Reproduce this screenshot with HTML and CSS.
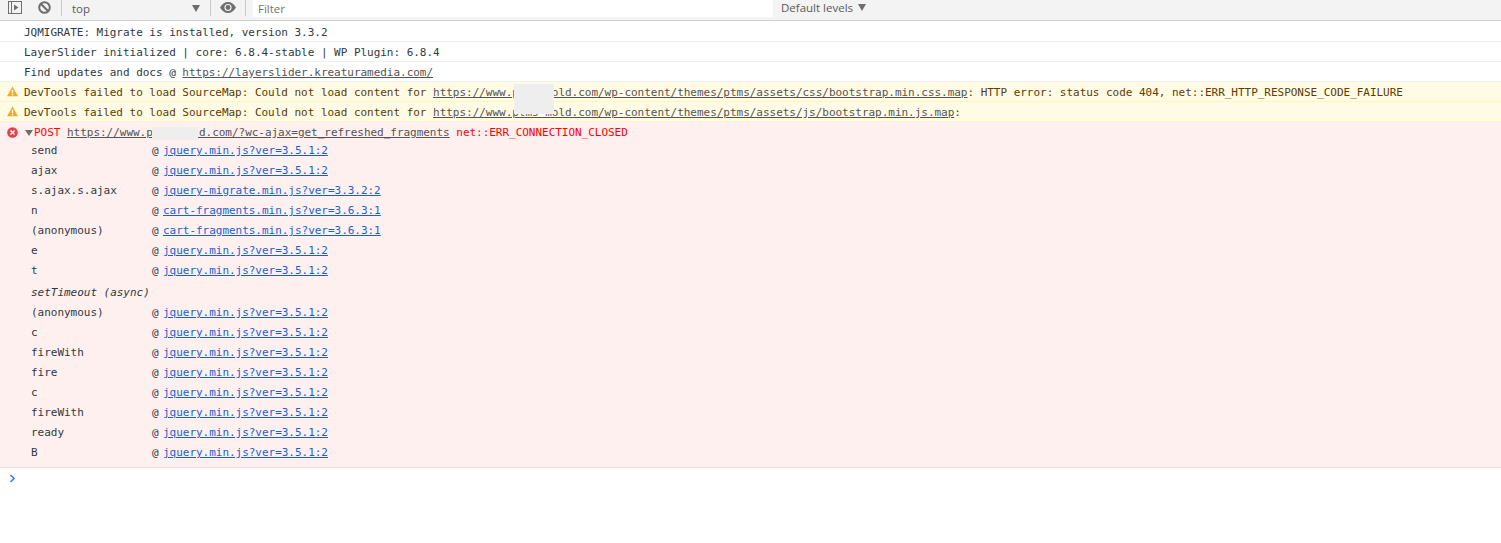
FILE: index.html
```html
<!DOCTYPE html>
<html lang="en">
<head>
<meta charset="utf-8">
<title>Console</title>
<link rel="stylesheet" href="styles.css">
</head>
<body>
<div class="toolbar">
  <svg class="tb-icon sidebar-icon" width="15" height="13" viewBox="0 0 15 13"><rect x="0.500" y="0.500" width="13" height="12" fill="none" stroke="#6e6e6e"/><path d="M3.500 .5v12" stroke="#6e6e6e" fill="none"/><path d="M6 3.500l4.500 3-4.500 3z" fill="#6e6e6e"/></svg>
  <svg class="tb-icon clear-icon" width="13" height="13" viewBox="0 0 13 13"><circle cx="6.500" cy="6.500" r="5.300" fill="none" stroke="#6e6e6e" stroke-width="2"/><path d="M2.800 2.800l7.400 7.400" stroke="#6e6e6e" stroke-width="2"/></svg>
  <span class="tb-sep sep-a"></span>
  <div class="context"><span>top</span><span class="caret"></span></div>
  <span class="tb-sep"></span>
  <svg class="tb-icon eye-icon" width="16" height="11" viewBox="0 0 16 11"><path d="M0 5.500C2 2 4.800 0 8 0s6 2 8 5.500c-2 3.500-4.800 5.500-8 5.500s-6-2-8-5.500z" fill="#6e6e6e"/><circle cx="8" cy="5.500" r="3.600" fill="#f3f3f3"/><circle cx="8" cy="5.500" r="2.400" fill="#6e6e6e"/></svg>
  <span class="tb-sep"></span>
  <div class="filter">Filter</div>
  <div class="levels"><span>Default levels</span><span class="caret"></span></div>
</div>

<div class="console">
  <div class="msg">JQMIGRATE: Migrate is installed, version 3.3.2</div>
  <div class="msg">LayerSlider initialized | core: 6.8.4-stable | WP Plugin: 6.8.4</div>
  <div class="msg">Find updates and docs @ <a class="plain-link">https://layerslider.kreaturamedia.com/</a></div>
  <div class="msg warn"><svg class="level-icon" width="11" height="11" viewBox="0 0 12 12"><path d="M6 .5L12 11.200H0z" fill="#f2ab26"/><path d="M5.300 4h1.400v4H5.300zM5.300 8.800h1.400v1.400H5.300z" fill="#fff"/></svg>DevTools failed to load SourceMap: Could not load content for <a class="warn-link">https://www.ptms-mold.com/wp-content/themes/ptms/assets/css/bootstrap.min.css.map</a>: HTTP error: status code 404, net::ERR_HTTP_RESPONSE_CODE_FAILURE</div>
  <div class="msg warn"><svg class="level-icon" width="11" height="11" viewBox="0 0 12 12"><path d="M6 .5L12 11.200H0z" fill="#f2ab26"/><path d="M5.300 4h1.400v4H5.300zM5.300 8.800h1.400v1.400H5.300z" fill="#fff"/></svg>DevTools failed to load SourceMap: Could not load content for <a class="warn-link">https://www.ptms-mold.com/wp-content/themes/ptms/assets/js/bootstrap.min.js.map</a>:</div>
  <div class="error">
    <div class="error-head"><svg class="level-icon err-icon" width="11" height="11" viewBox="0 0 12 12"><circle cx="6" cy="6" r="5.800" fill="#e8404a"/><path d="M3.800 3.800l4.400 4.400M8.200 3.800l-4.400 4.400" stroke="#fff" stroke-width="1.500"/></svg><span class="tri"></span><span class="err-text">POST</span> <a class="plain-link">https://www.ptms-mold.com/?wc-ajax=get_refreshed_fragments</a> <span class="err-text">net::ERR_CONNECTION_CLOSED</span></div>
    <div class="stack">
      <div class="frame"><span>send</span><span class="at">@<a>jquery.min.js?ver=3.5.1:2</a></span></div>
      <div class="frame"><span>ajax</span><span class="at">@<a>jquery.min.js?ver=3.5.1:2</a></span></div>
      <div class="frame"><span>s.ajax.s.ajax</span><span class="at">@<a>jquery-migrate.min.js?ver=3.3.2:2</a></span></div>
      <div class="frame"><span>n</span><span class="at">@<a>cart-fragments.min.js?ver=3.6.3:1</a></span></div>
      <div class="frame"><span>(anonymous)</span><span class="at">@<a>cart-fragments.min.js?ver=3.6.3:1</a></span></div>
      <div class="frame"><span>e</span><span class="at">@<a>jquery.min.js?ver=3.5.1:2</a></span></div>
      <div class="frame"><span>t</span><span class="at">@<a>jquery.min.js?ver=3.5.1:2</a></span></div>
      <div class="async">setTimeout (async)</div>
      <div class="frame"><span>(anonymous)</span><span class="at">@<a>jquery.min.js?ver=3.5.1:2</a></span></div>
      <div class="frame"><span>c</span><span class="at">@<a>jquery.min.js?ver=3.5.1:2</a></span></div>
      <div class="frame"><span>fireWith</span><span class="at">@<a>jquery.min.js?ver=3.5.1:2</a></span></div>
      <div class="frame"><span>fire</span><span class="at">@<a>jquery.min.js?ver=3.5.1:2</a></span></div>
      <div class="frame"><span>c</span><span class="at">@<a>jquery.min.js?ver=3.5.1:2</a></span></div>
      <div class="frame"><span>fireWith</span><span class="at">@<a>jquery.min.js?ver=3.5.1:2</a></span></div>
      <div class="frame"><span>ready</span><span class="at">@<a>jquery.min.js?ver=3.5.1:2</a></span></div>
      <div class="frame"><span>B</span><span class="at">@<a>jquery.min.js?ver=3.5.1:2</a></span></div>
    </div>
  </div>
  <div class="prompt">
    <svg width="7" height="9" viewBox="0 0 7 9"><path d="M1.500 1l3.500 3.500L1.500 8" fill="none" stroke="#367cf1" stroke-width="1.600"/></svg>
  </div>
  <span class="redact redact-a"></span>
  <span class="redact redact-b"></span>
</div>
</body>
</html>
```

FILE: styles.css
```css
* { box-sizing: border-box; }
html, body { margin: 0; padding: 0; background: #fff; overflow: hidden; }
body { width: 1501px; height: 543px; font-family: "DejaVu Sans Mono", monospace; font-size: 11px; letter-spacing: -0.025px; color: #303942; }

.toolbar { height: 21px; display: flex; align-items: flex-start; background: #f3f3f3; border-bottom: 1px solid #d0d0d0; font-family: "Open Sans", sans-serif; font-size: 11.5px; letter-spacing: 0; color: #5a5a5a; }
.tb-icon { flex: none; }
.sidebar-icon { margin: 1px 0 0 8px; }
.clear-icon { margin: 1px 0 0 15px; }
.tb-sep { flex: none; width: 1px; height: 16px; background: #ccc; }
.sep-a { margin-left: 10px; }
.context { flex: none; width: 148px; height: 16px; display: flex; justify-content: space-between; align-items: center; padding: 0 10px 0 10px; }
.caret { width: 0; height: 0; border-left: 4px solid transparent; border-right: 4px solid transparent; border-top: 7px solid #6e6e6e; }
.eye-icon { margin: 2px 9px 0 9px; }
.filter { flex: none; width: 520px; height: 17px; margin-left: 7px; background: #fff; padding-left: 5px; line-height: 18px; color: #757575; }
.levels { display: flex; align-items: center; gap: 5px; margin-left: 8px; height: 15px; }

.console { position: relative; padding-top: 1px; }
.msg { height: 20px; padding-left: 24px; line-height: 22px; border-bottom: 1px solid #f0f0f0; position: relative; white-space: nowrap; }
.plain-link { color: #545454; text-decoration: underline; }
.level-icon { position: absolute; left: 7px; top: 4px; }
.err-icon { top: 5px; }
.warn { background: #fffbe5; border-bottom-color: #fff5c2; color: #5c3c00; }
.warn-link { color: #545454; text-decoration: underline; }
.error { background: #fff0f0; border-bottom: 1px solid #ffd6d6; height: 346px; position: relative; }
.error-head { height: 19px; padding-left: 24px; line-height: 22px; color: #303942; white-space: nowrap; position: relative; }
.tri { display: inline-block; width: 0; height: 0; margin: 0 1px 0 1px; border-left: 4px solid transparent; border-right: 4px solid transparent; border-top: 6px solid #6e6e6e; }
.err-text { color: #f00; }
.stack { padding: 0 0 0 31px; }
.frame { height: 20px; line-height: 20px; display: grid; grid-template-columns: 121px auto; justify-content: start; }
.at a { color: #1a5fd0; text-decoration: underline; margin-left: 4.400px; }
.async { height: 22px; line-height: 24px; font-style: italic; }
.prompt { height: 20px; padding: 6px 0 0 9px; display: flex; align-items: flex-start; }
.redact { position: absolute; background: #eeeeee; }
.redact-a { left: 514px; top: 63px; width: 40px; height: 30px; }
.redact-b { left: 152px; top: 106px; width: 46px; height: 13px; }
```
